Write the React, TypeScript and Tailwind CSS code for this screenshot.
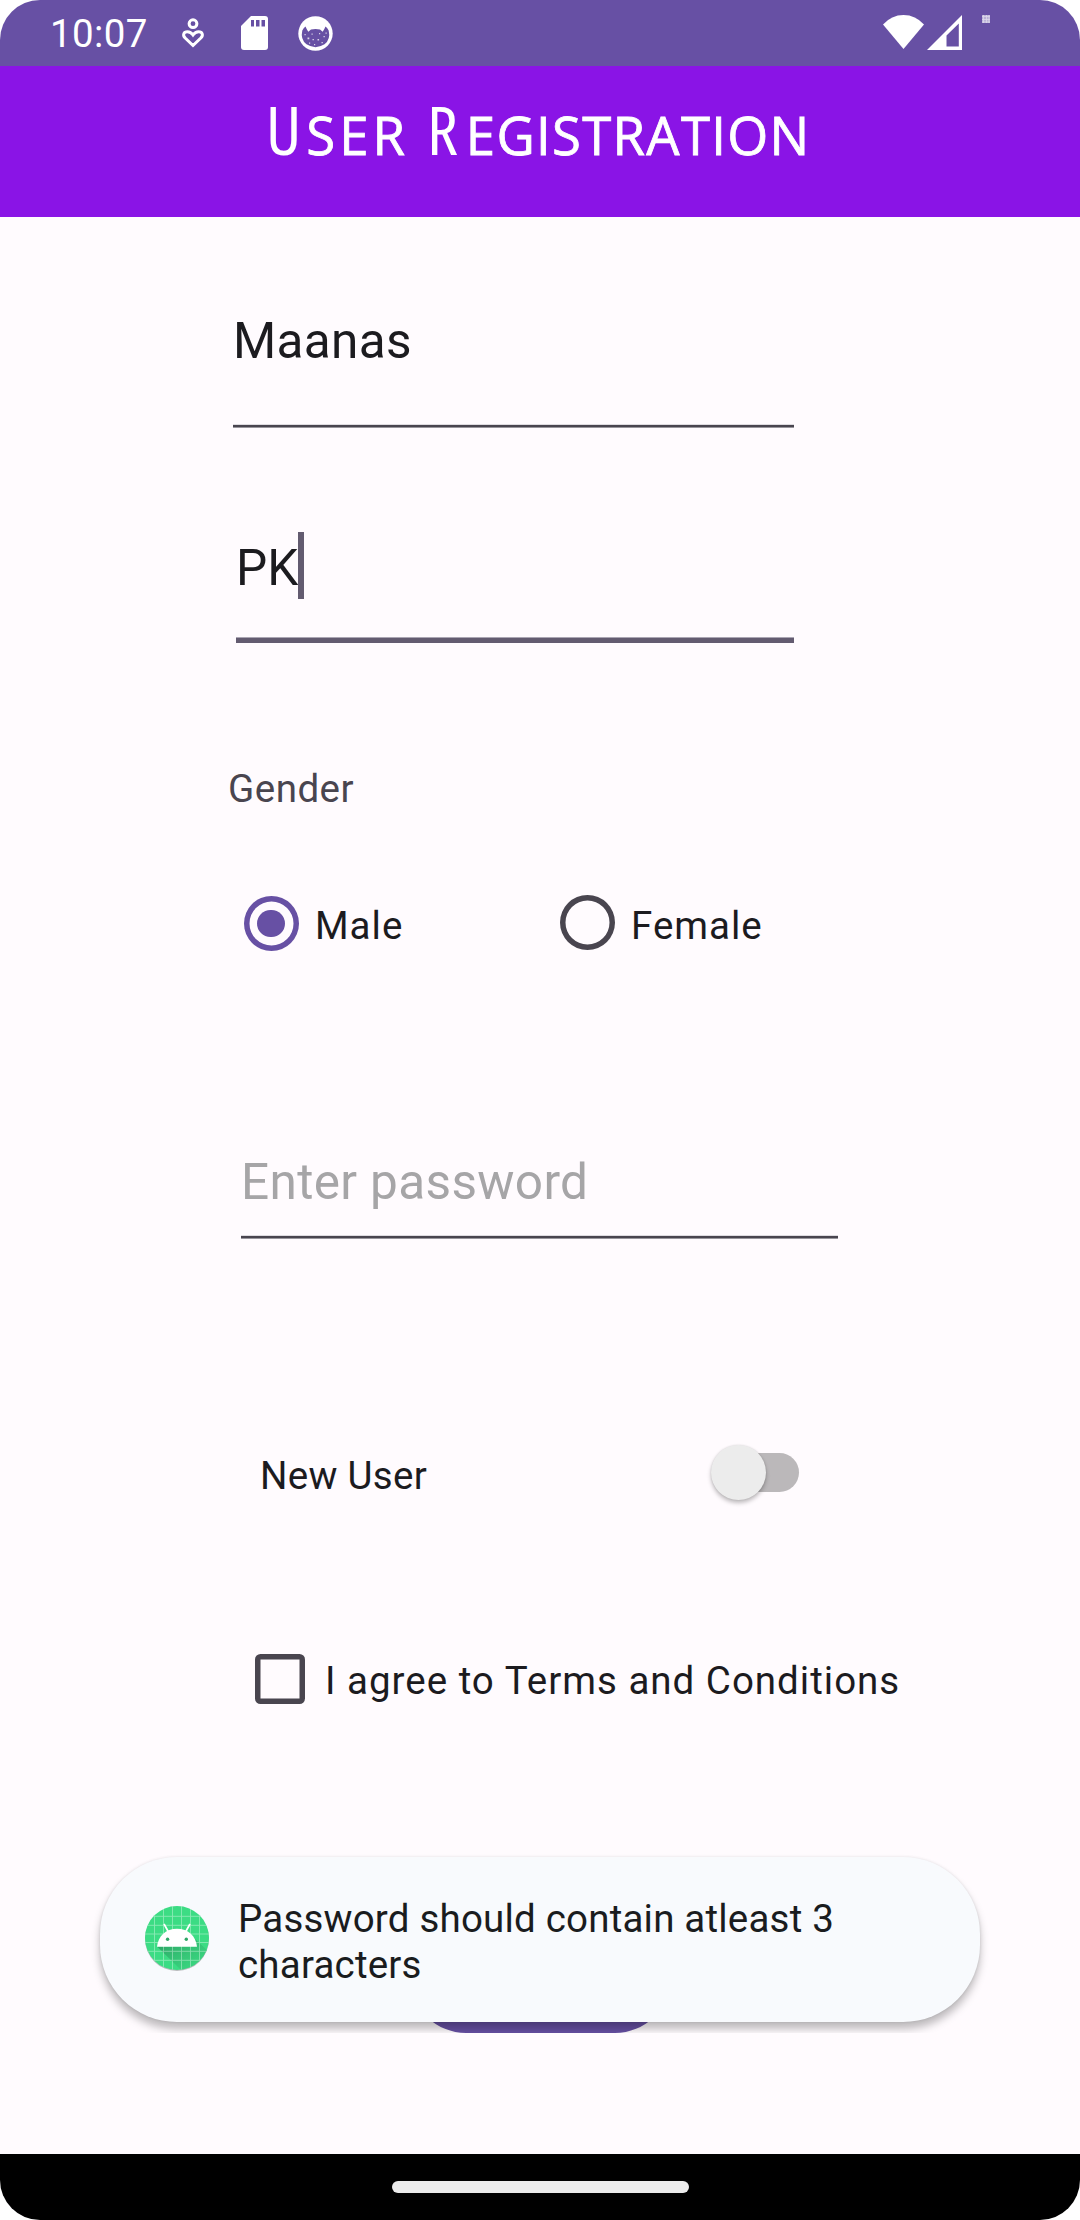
import type { ReactNode } from 'react';

function StatusBar() {
  return (
    <div className="flex h-[66px] shrink-0 items-start bg-[#6750a4] text-white">
      <span className="ml-[50px] mt-[9px] text-[38.5px] leading-[50px] tracking-[0.4px]">10:07</span>
      <svg className="ml-[33.5px] mt-[14px] h-10 w-6" viewBox="0 0 24 40" fill="none" stroke="currentColor" strokeWidth="3">
        <circle cx="12" cy="9.700" r="3.900" />
        <path d="M12 31.500 L4.200 24 C1.200 20.800 2.800 17.800 6.400 17.800 C9 17.800 10.600 19 12 21 C13.400 19 15 17.800 17.600 17.800 C21.200 17.800 22.800 20.800 19.800 24 Z" />
      </svg>
      <svg className="ml-[36px] mt-4 h-[34px] w-[27px]" viewBox="0 0 27 34">
        <path d="M10 0 H24 Q27 0 27 3 V31 Q27 34 24 34 H3 Q0 34 0 31 V10 Z" fill="currentColor" />
        <path d="M10 4 h3 v6.500 h-3 z M15 4 h3.500 v6.500 h-3.500 z M20.500 4 h3.500 v6.500 h-3.500 z" fill="#6750a4" />
      </svg>
      <svg className="ml-[30px] mt-4 h-[35px] w-[35px]" viewBox="0 0 35 35">
        <circle cx="17.500" cy="17.500" r="17.200" fill="currentColor" />
        <path d="M4.300 14.500 Q5.500 12 7.500 10.500 Q8.500 13 10.300 15.800 L13 13.400 Q17.500 12.600 22 13.400 L24.700 15.800 Q26.500 13 27.500 10.500 Q29.500 12 30.700 14.500 Q32.800 23.500 26.500 28.300 Q17.500 34 8.500 28.300 Q2.200 23.500 4.300 14.500 Z" fill="#6750a4" />
        <path d="M9.500 21.500 h1.800 v1.800 h-1.800 z M13.500 17.500 h1.200 v1.200 h-1.200 z M14.500 23 h1.400 v1.200 h-1.400 z M21 17 h1.200 v1.200 h-1.200 z M19.500 23 h1.600 v1.600 h-1.600 z M25.500 20 h1.300 v1.300 h-1.300 z M11 26.500 h1.200 v1.200 h-1.200 z M16 28 h1.200 v1.200 h-1.200 z M23.500 26 h1.300 v1.300 h-1.300 z M27.500 16.500 h1.200 v1.200 h-1.200 z M6.500 18 h1.200 v1.200 h-1.200 z" fill="currentColor" opacity="0.75" />
      </svg>
      <svg className="ml-auto mr-[3px] mt-[15px] h-[34px] w-[41px]" viewBox="0 0 41 34">
        <path d="M0 9.500 Q8.500 0 20.500 0 Q32.500 0 41 9.500 L20.500 34 Z" fill="currentColor" />
      </svg>
      <svg className="mr-5 mt-[15px] h-[35px] w-[35px]" viewBox="0 0 35 35">
        <path fillRule="evenodd" d="M35 0 V35 H0 Z M31.800 8.500 L19.500 20.500 V31.500 H31.800 Z" fill="currentColor" />
      </svg>
      <svg className="mr-[90px] mt-[15px] h-2 w-2" viewBox="0 0 8 8">
        <rect width="8" height="8" fill="#fff" opacity="0.55" />
        <path d="M0 1.500 H8 M0 4.500 H8 M0 7 H8 M1.500 0 V8 M4.500 0 V8 M7 0 V8" stroke="#fff" strokeWidth="0.8" opacity="0.5" />
      </svg>
    </div>
  );
}

function Underline() {
  return <div className="h-[2px] bg-[#49454f] shadow-[0_-1px_0_#dedbe0,0_1px_0_#98959c]" />;
}

function Label({ children, className }: { children: ReactNode; className: string }) {
  return <span className={`whitespace-nowrap text-[38.5px] leading-[50px] ${className}`}>{children}</span>;
}

function AppIcon() {
  return (
    <svg className="ml-[45px] mt-[49px] h-[66px] w-[64px] shrink-0" viewBox="0 0 64 66">
      <defs>
        <clipPath id="disc"><circle cx="32" cy="32" r="32" /></clipPath>
        <linearGradient id="cast" x1="0" y1="0" x2="1" y2="1">
          <stop offset="0" stopColor="#2a9c60" />
          <stop offset="1" stopColor="#3ddc84" stopOpacity="0.5" />
        </linearGradient>
      </defs>
      <circle cx="32" cy="33" r="32" fill="#000" opacity="0.25" />
      <g clipPath="url(#disc)">
        <rect width="64" height="64" fill="#3ddc84" />
        <path d="M12 40.500 L36 64 H64 V46 L50 33 V40.500 Z" fill="url(#cast)" />
        <path d="M9.500 0 V64 M18.500 0 V64 M27.500 0 V64 M36.500 0 V64 M45.500 0 V64 M54.500 0 V64 M0 10.300 H64 M0 19.300 H64 M0 28 H64 M0 36.500 H64 M0 45.300 H64 M0 54.300 H64" stroke="#fff" strokeWidth="0.900" opacity="0.4" />
      </g>
      <path d="M12 40.700 C13 30 21 22.700 32 22.700 C43 22.700 51 30 52 40.700 Z" fill="#fff" />
      <path d="M19 18 L23.500 26 M45 18 L40.500 26" stroke="#fff" strokeWidth="1.700" />
      <circle cx="22.600" cy="33.300" r="1.700" fill="#2fa866" />
      <circle cx="41.300" cy="33.300" r="1.700" fill="#2fa866" />
    </svg>
  );
}

function Toast() {
  return (
    <div className="absolute inset-x-0 top-[1830px] h-[203px] overflow-hidden px-[100px] pt-[27px]">
      <div className="flex h-[165px] rounded-[77px] bg-[#f8fafd] shadow-[0_7px_9px_rgba(0,0,0,0.26),0_0_3px_rgba(0,0,0,0.1)]">
        <AppIcon />
        <p className="ml-[29px] mt-[39px] text-[38.5px] leading-[46px] tracking-[0.2px] text-[#1a1c1e]">
          Password should contain atleast 3
          <br />
          characters
        </p>
      </div>
    </div>
  );
}

export default function App() {
  return (
    <div className="bg-white">
      <div className="relative flex h-[2220px] w-[1080px] flex-col overflow-hidden rounded-[40px] bg-[#fffbfe] font-['Roboto',sans-serif]">
        <StatusBar />
        <header className="flex h-[151px] shrink-0 items-start bg-[#8a14e6] pl-[266px] pt-[15px]">
          <h1 className="flex items-baseline whitespace-nowrap font-['Open_Sans',sans-serif] text-[68px] leading-[96px] text-white">
            <span className="[font-stretch:84%]">U</span>
            <span className="ml-[5px] text-[52.7px] uppercase tracking-[4px] [-webkit-text-stroke:0.8px_#fff] [font-stretch:93%]">ser</span>
            <span className="ml-[18px] [font-stretch:84%]">R</span>
            <span className="ml-[8px] text-[52.7px] uppercase tracking-[1.3px] [-webkit-text-stroke:0.8px_#fff] [font-stretch:92%]">egistration</span>
          </h1>
        </header>
        <main className="flex grow flex-col items-start text-[#1c1b1f]">
          <div className="ml-[233px] mt-[94px] w-[561px]">
            <div className="h-[114px] text-[49.5px] leading-[60px] tracking-[0.35px]">Maanas</div>
            <Underline />
          </div>
          <div className="ml-[236px] mt-[105px] flex h-[111px] w-[558px] items-start border-b-[5px] border-[#635b70] shadow-[inset_0_-1px_0_#aba6b3]">
            <span className="mt-[6px] text-[49.5px] leading-[60px]">PK</span>
            <div className="ml-[-0.3px] h-[67px] w-[6px] bg-[#635b70]" />
          </div>
          <Label className="ml-[228px] mt-[121px] tracking-[0.5px] text-[#49454f]">Gender</Label>
          <div className="ml-[243.5px] mt-[81px] flex h-14 items-start">
            <div className="mt-px flex size-[55px] items-center justify-center rounded-full shadow-[inset_0_0_0_5.5px_#6750a4]">
              <div className="size-[27.5px] rounded-full bg-[#6750a4]" />
            </div>
            <Label className="ml-[16.5px] mt-[6px] w-[244.5px] tracking-[1px]">Male</Label>
            <div className="size-[55px] rounded-full shadow-[inset_0_0_0_5.5px_#49454f]" />
            <Label className="ml-[16.5px] mt-[6px] tracking-[1px]">Female</Label>
          </div>
          <div className="ml-[241px] mt-[201px] w-[597px]">
            <div className="h-[84px] text-[49.5px] leading-[60px] tracking-[0.35px] text-[#a6a5a7]">Enter password</div>
            <Underline />
          </div>
          <div className="ml-[260px] mt-[207px] flex h-[55px] items-start">
            <Label className="mt-[6px] w-[450.5px] tracking-[0.3px]">New User</Label>
            <div className="relative flex h-[55px] w-[88px] items-center">
              <div className="ml-5 h-[39px] w-[68px] rounded-r-full bg-[#bbb8ba]" />
              <div className="absolute left-0 top-0 size-[55px] rounded-full bg-[#ececec] shadow-[0_3px_4px_rgba(0,0,0,0.25),0_0_2px_rgba(0,0,0,0.12)]" />
            </div>
          </div>
          <div className="ml-[255px] mt-[154px] flex h-[50px] items-start">
            <div className="size-[49.5px] rounded-[5.5px] shadow-[inset_0_0_0_5.5px_#49454f]" />
            <Label className="ml-[20.5px] mt-[2px] tracking-[1px]">I agree to Terms and Conditions</Label>
          </div>
          <div className="ml-[411px] mt-[219px] h-[110px] w-[259px] rounded-full bg-[#6750a4]" />
        </main>
        <footer className="flex h-[66px] shrink-0 justify-center bg-black pt-[27px]">
          <div className="h-3 w-[297px] rounded-full bg-[#ececec]" />
        </footer>
        <Toast />
      </div>
    </div>
  );
}
